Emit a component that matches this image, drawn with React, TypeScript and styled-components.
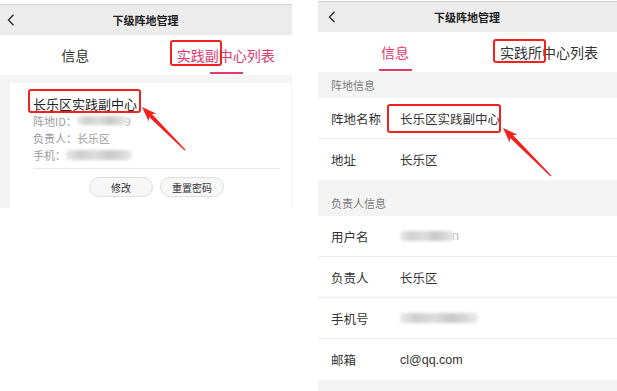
import React from "react";
import styled, { createGlobalStyle } from "styled-components";

const GlobalStyle = createGlobalStyle`
  html, body { margin: 0; padding: 0; background: #ffffff; }
  body { font-family: "Liberation Sans", "Noto Sans CJK SC", sans-serif; color: #333; }
  * { box-sizing: border-box; }
`;

const PINK = "#e0396c";
const RED = "#f0211f";

const Page = styled.div`
  display: flex;
  align-items: flex-start;
  gap: 26px;
  width: 617px;
  height: 391px;
  overflow: hidden;
`;

const Frame = styled.div<{ $w: number; $top: number; $h: number }>`
  position: relative;
  flex: none;
  width: ${(p) => p.$w}px;
  height: ${(p) => p.$h}px;
  margin-top: ${(p) => p.$top}px;
  overflow: hidden;
`;

const Screen = styled.div<{ $w: number }>`
  width: ${(p) => p.$w}px;
  display: flex;
  flex-direction: column;
`;

const Header = styled.div`
  display: grid;
  grid-template-columns: 30px 1fr 40px;
  align-items: center;
  height: 31px;
  border-top: 1px solid #d3d3d3;
  background: #ececec;
`;

const Back = styled.div<{ $pad: number }>`
  display: flex;
  align-items: center;
  padding-left: ${(p) => p.$pad}px;
`;

const Title = styled.div`
  text-align: center;
  font-size: 11px;
  font-weight: bold;
  color: #1e1e1e;
  font-family: "Noto Sans CJK SC", sans-serif;
`;

const Tabs = styled.div<{ $h: number }>`
  display: flex;
  height: ${(p) => p.$h}px;
  background: #ffffff;
`;

const Tab = styled.div<{ $active?: boolean }>`
  position: relative;
  flex: 1;
  display: flex;
  align-items: center;
  justify-content: center;
  white-space: nowrap;
  font-size: 14px;
  font-family: "Noto Sans CJK SC", sans-serif;
  color: ${(p) => (p.$active ? PINK : "#333333")};
  &::after {
    content: "";
    display: ${(p) => (p.$active ? "block" : "none")};
    position: absolute;
    left: 50%;
    bottom: 1px;
    width: 33px;
    height: 2px;
    margin-left: -16px;
    background: ${PINK};
  }
`;

const GreyArea = styled.div`
  background: #f4f4f4;
  padding-top: 8px;
`;

const Card = styled.div`
  margin: 0 10px;
  background: #ffffff;
  padding: 13px 11px 11px 23px;
  font-family: "Noto Sans CJK SC", sans-serif;
`;

const CardName = styled.div`
  font-size: 13px;
  line-height: 16px;
  color: #222222;
`;

const InfoList = styled.div`
  display: flex;
  flex-direction: column;
`;

const InfoLine = styled.div`
  display: flex;
  align-items: center;
  height: 17px;
  font-size: 11px;
  color: #9a9a9a;
  white-space: nowrap;
`;

const Blur = styled.span<{ $w: number; $h?: number }>`
  display: inline-block;
  width: ${(p) => p.$w}px;
  height: ${(p) => p.$h ?? 9}px;
  border-radius: 4px;
  background: linear-gradient(90deg, #e9e9e9, #cfcfcf 20%, #dcdcdc 45%, #c9c9c9 65%, #d8d8d8 85%, #ececec);
  filter: blur(1.6px);
`;

const Faint = styled.span`
  color: #b5b5b5;
  margin-left: -2px;
`;

const CardDivider = styled.div`
  height: 1px;
  margin-top: 5px;
  background: #e9e9e9;
`;

const Buttons = styled.div`
  display: flex;
  justify-content: center;
  gap: 7px;
  margin-top: 8px;
`;

const PillButton = styled.div`
  width: 64px;
  height: 20px;
  display: flex;
  align-items: center;
  justify-content: center;
  border: 1px solid #dedede;
  border-radius: 10px;
  background: #f7f7f7;
  font-size: 10px;
  color: #333333;
`;

const SectionHeader = styled.div<{ $gap?: number }>`
  display: flex;
  align-items: center;
  height: 26px;
  margin-top: ${(p) => p.$gap ?? 0}px;
  padding-left: 13px;
  font-size: 11px;
  color: #7a7a7a;
  font-family: "Noto Sans CJK SC", sans-serif;
`;

const InfoPage = styled.div`
  background: #f4f4f4;
  padding-bottom: 20px;
`;

const Group = styled.div`
  background: #ffffff;
`;

const Row = styled.div<{ $last?: boolean }>`
  display: flex;
  align-items: center;
  height: 41px;
  padding-left: 13px;
  border-bottom: ${(p) => (p.$last ? "none" : "1px solid #ededed")};
  font-size: 12.5px;
  color: #333333;
`;

const Label = styled.div`
  width: 69px;
  flex: none;
  font-family: "Noto Sans CJK SC", sans-serif;
`;

const Value = styled.div`
  display: flex;
  align-items: center;
  font-family: "Liberation Sans", "Noto Sans CJK SC", sans-serif;
`;

const RedBox = styled.div<{ $x: number; $y: number; $w: number; $h: number }>`
  position: absolute;
  left: ${(p) => p.$x}px;
  top: ${(p) => p.$y}px;
  width: ${(p) => p.$w}px;
  height: ${(p) => p.$h}px;
  border: 2px solid ${RED};
  border-radius: 3px;
  pointer-events: none;
`;

const Overlay = styled.svg`
  position: absolute;
  left: 0;
  top: 0;
  width: 100%;
  height: 100%;
  pointer-events: none;
`;

function arrowPoints(tx: number, ty: number, sx: number, sy: number): string {
  const dx = tx - sx;
  const dy = ty - sy;
  const L = Math.hypot(dx, dy);
  const ux = dx / L;
  const uy = dy / L;
  const nx = -uy;
  const ny = ux;
  const headLen = 15;
  const headHalf = 5.5;
  const shaftHalf = 2;
  const tailHalf = 0.5;
  const bx = tx - ux * headLen;
  const by = ty - uy * headLen;
  const jx = tx - ux * (headLen - 3);
  const jy = ty - uy * (headLen - 3);
  const pts: [number, number][] = [
    [tx, ty],
    [bx + nx * headHalf, by + ny * headHalf],
    [jx + nx * shaftHalf, jy + ny * shaftHalf],
    [sx + nx * tailHalf, sy + ny * tailHalf],
    [sx - nx * tailHalf, sy - ny * tailHalf],
    [jx - nx * shaftHalf, jy - ny * shaftHalf],
    [bx - nx * headHalf, by - ny * headHalf],
  ];
  return pts.map(([x, y]) => `${x.toFixed(1)},${y.toFixed(1)}`).join(" ");
}

const Chevron = () => (
  <svg width="8" height="12" viewBox="0 0 8 12">
    <polyline points="6.5,0.8 1.5,6 6.5,11.2" fill="none" stroke="#2a2a2a" strokeWidth="1.3" />
  </svg>
);

const Arrow = ({ tx, ty, sx, sy }: { tx: number; ty: number; sx: number; sy: number }) => (
  <polygon points={arrowPoints(tx, ty, sx, sy)} fill={RED} />
);

const LeftScreen = () => (
  <Frame $w={292} $top={4} $h={205}>
    <Screen $w={301}>
      <Header>
        <Back $pad={7}>
          <Chevron />
        </Back>
        <Title>下级阵地管理</Title>
        <div />
      </Header>
      <Tabs $h={40}>
        <Tab>信息</Tab>
        <Tab $active>实践副中心列表</Tab>
      </Tabs>
      <GreyArea>
        <Card>
          <CardName>长乐区实践副中心</CardName>
          <InfoList>
            <InfoLine>
              阵地ID：<Blur $w={50} />
              <Faint>9</Faint>
            </InfoLine>
            <InfoLine>负责人：长乐区</InfoLine>
            <InfoLine>
              手机：<Blur $w={66} $h={10} />
            </InfoLine>
          </InfoList>
          <CardDivider />
          <Buttons>
            <PillButton>修改</PillButton>
            <PillButton>重置密码</PillButton>
          </Buttons>
        </Card>
      </GreyArea>
    </Screen>
    <RedBox $x={170} $y={36} $w={52} $h={26} />
    <RedBox $x={28} $y={85} $w={113} $h={24} />
    <Overlay>
      <Arrow tx={142} ty={103} sx={185} sy={146} />
    </Overlay>
  </Frame>
);

const RightScreen = () => (
  <Frame $w={299} $top={1} $h={390}>
    <Screen $w={308}>
      <Header>
        <Back $pad={10}>
          <Chevron />
        </Back>
        <Title>下级阵地管理</Title>
        <div />
      </Header>
      <Tabs $h={40}>
        <Tab $active>信息</Tab>
        <Tab>实践所中心列表</Tab>
      </Tabs>
      <InfoPage>
        <SectionHeader>阵地信息</SectionHeader>
        <Group>
          <Row>
            <Label>阵地名称</Label>
            <Value>长乐区实践副中心</Value>
          </Row>
          <Row $last>
            <Label>地址</Label>
            <Value>长乐区</Value>
          </Row>
        </Group>
        <SectionHeader $gap={10}>负责人信息</SectionHeader>
        <Group>
          <Row>
            <Label>用户名</Label>
            <Value>
              <Blur $w={54} $h={10} />
              <Faint>n</Faint>
            </Value>
          </Row>
          <Row>
            <Label>负责人</Label>
            <Value>长乐区</Value>
          </Row>
          <Row>
            <Label>手机号</Label>
            <Value>
              <Blur $w={78} $h={10} />
            </Value>
          </Row>
          <Row $last>
            <Label>邮箱</Label>
            <Value>cl@qq.com</Value>
          </Row>
        </Group>
      </InfoPage>
    </Screen>
    <RedBox $x={175} $y={38} $w={53} $h={24} />
    <RedBox $x={69} $y={103} $w={114} $h={29} />
    <Overlay>
      <Arrow tx={185} ty={127} sx={233} sy={175} />
    </Overlay>
  </Frame>
);

export default function App() {
  return (
    <>
      <GlobalStyle />
      <Page>
        <LeftScreen />
        <RightScreen />
      </Page>
    </>
  );
}
